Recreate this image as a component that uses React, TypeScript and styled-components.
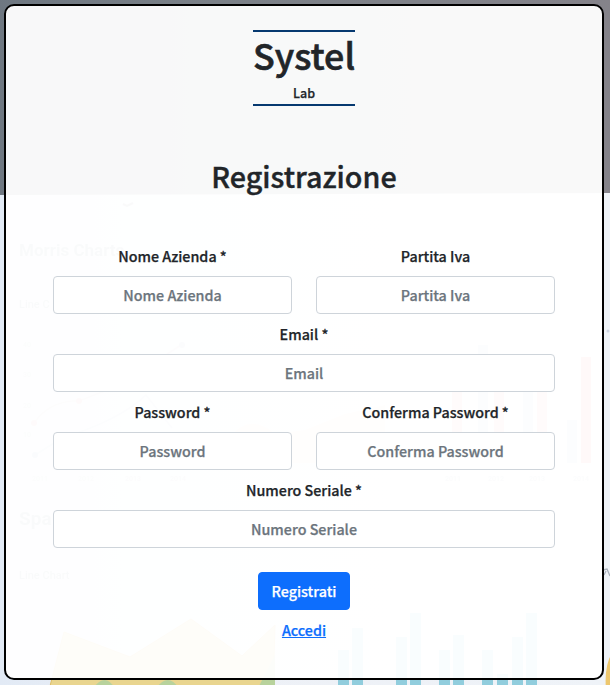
import React from "react";
import styled, { createGlobalStyle } from "styled-components";

const GlobalStyle = createGlobalStyle`
  *, *::before, *::after { box-sizing: border-box; }
  body {
    margin: 0;
    overflow: hidden;
    color: #212529;
    font-family: "Noto Sans CJK JP", "Noto Sans", sans-serif;
    font-size: 14.3px;
    font-weight: 500;
    line-height: 24px;
    -webkit-text-stroke: 0.25px currentColor;
  }
`;

const Page = styled.main`
  position: relative;
  isolation: isolate;
  width: 610px;
  height: 685px;
  padding: 4px 6px 5px 4px;
  overflow: hidden;
`;

const Backdrop = styled.svg`
  position: absolute;
  inset: 0;
  z-index: -1;
  -webkit-text-stroke: 0;
`;

const Card = styled.section`
  display: flex;
  flex-direction: column;
  align-items: center;
  height: 100%;
  padding: 24px 47px;
  border: 2px solid #000;
  border-radius: 10px;
  background: rgba(255, 255, 255, 0.95);
  text-align: center;
`;

const Brand = styled.header`
  height: 76px;
  border-top: 2px solid #063970;
  border-bottom: 2px solid #063970;
`;

const BrandName = styled.h1`
  margin: 0;
  font-size: 35.8px;
  font-weight: 500;
  line-height: 44px;
  -webkit-text-stroke-width: 0.6px;
`;

const BrandUnit = styled.p`
  margin: 7px 0 0;
  font-size: 12.5px;
  line-height: 20px;
`;

const Title = styled.h2`
  margin: 51px 0 0;
  font-size: 28.7px;
  font-weight: 500;
  line-height: 38px;
  -webkit-text-stroke-width: 0.4px;
`;

const Form = styled.form`
  display: grid;
  grid-template-columns: 1fr 1fr;
  column-gap: 24px;
  row-gap: 8px;
  width: 502px;
  margin-top: 49px;
`;

const Field = styled.label<{ $wide?: boolean }>`
  display: grid;
  row-gap: 8px;
  grid-column: ${({ $wide }) => ($wide ? "1 / -1" : "auto")};
`;

const Input = styled.input`
  width: 100%;
  height: 38px;
  padding: 5px 12px 7px;
  border: 1px solid #ced4da;
  border-radius: 4px;
  background: #fff;
  color: #212529;
  font: inherit;
  text-align: center;
  outline: none;
  &::placeholder { color: #6c757d; opacity: 1; }
`;

const Submit = styled.button`
  grid-column: 1 / -1;
  justify-self: center;
  width: 92px;
  height: 38px;
  margin-top: 16px;
  padding: 6px 12px;
  border: 1px solid #0d6efd;
  border-radius: 4px;
  background: #0d6efd;
  color: #fff;
  font: inherit;
`;

const LoginLink = styled.a`
  margin-top: 8px;
  color: #0d6efd;
  text-decoration: underline;
`;

const fields = [
  { label: "Nome Azienda *", placeholder: "Nome Azienda" },
  { label: "Partita Iva", placeholder: "Partita Iva" },
  { label: "Email *", placeholder: "Email", type: "email", wide: true },
  { label: "Password *", placeholder: "Password", type: "password" },
  { label: "Conferma Password *", placeholder: "Conferma Password", type: "password" },
  { label: "Numero Seriale *", placeholder: "Numero Seriale", wide: true },
];

const cyanBars = [
  [338, 650], [352, 628], [396, 637], [410, 613], [439, 650],
  [453, 635], [482, 650], [497, 674], [512, 637], [526, 613],
];
const redBars = [[452, 388], [494, 386], [537, 388], [581, 357]];
const blueBars = [[478, 345], [523, 390], [567, 420]];

function DashboardBackdrop() {
  return (
    <Backdrop width="610" height="685" viewBox="0 0 610 685" aria-hidden="true">
      <defs>
        <linearGradient id="wall" x1="0" x2="1">
          <stop offset="0" stopColor="#6e7781" />
          <stop offset=".35" stopColor="#7b8188" />
          <stop offset="1" stopColor="#85838a" />
        </linearGradient>
        <linearGradient id="screen" x1="0" x2="1">
          <stop offset="0" stopColor="#e2eaf5" />
          <stop offset=".3" stopColor="#edf0f6" />
          <stop offset="1" stopColor="#eff3f8" />
        </linearGradient>
        <filter id="soft" colorInterpolationFilters="sRGB"><feGaussianBlur stdDeviation=".7" /></filter>
      </defs>
      <rect width="610" height="685" fill="url(#screen)" />
      <g filter="url(#soft)">
        <path d="M-4-4H614V193L-4 195Z" fill="url(#wall)" />
        <path d="M123 204l4 2 6-3" stroke="#8f969d" strokeWidth="2" fill="none" />
        <g fill="#8fa3a8" fontFamily="Roboto, sans-serif">
          <text x="19" y="256" fontSize="17" fontWeight="700">Morris Charts</text>
          <text x="19" y="308" fontSize="11">Line C</text>
          <text x="19" y="525" fontSize="19" fontWeight="700">Spa</text>
          <text x="19" y="579" fontSize="11">Line Chart</text>
        </g>
        <g fill="#b5bec6" fontFamily="Roboto, sans-serif" fontSize="7">
          {[32, 78, 125, 170, 445, 488, 529, 573].map((x, i) => (
            <text key={x} x={x} y="481">{2011 + (i % 4)}</text>
          ))}
          <text x="23" y="347">40</text><text x="23" y="377">30</text>
          <text x="23" y="408">20</text><text x="23" y="437">10</text>
        </g>
        <path d="M34 423Q50 400 79 401L120 385L181 345" fill="none" stroke="#d5c9cb" strokeWidth="1.5" />
        <circle cx="34" cy="423" r="3" fill="#e0a0a6" />
        <circle cx="79" cy="401" r="3" fill="#e0a0a6" />
        <path d="M35 455L62 438Q120 420 146 395L172 428" fill="none" stroke="#b8cde0" strokeWidth="1.5" />
        <circle cx="35" cy="455" r="3" fill="#98b5d0" />
        <circle cx="182" cy="345" r="3" fill="#a8c1d8" />
        <path d="M305 430L345 414L385 405V463H230V437Q250 412 275 434Z" fill="#f0ead2" />
        {redBars.map(([x, y], i) => (
          <rect key={x} x={x} y={y} width="10" height={463 - y} fill={i === 3 ? "#f0868c" : "#f2b0b4"} />
        ))}
        {blueBars.map(([x, y]) => <rect key={x} x={x} y={y} width="10" height={463 - y} fill="#bdd6e8" />)}
        <path d="M49 690L64 632L130 657L191 619L242 656L275 625L273 690Z" fill="#e9d58f" stroke="#dfbd65" />
        <path d="M92 690Q105 670 116 690ZM155 690Q168 670 180 690ZM257 690L275 655V690Z" fill="#b8d29c" />
        {cyanBars.map(([x, y]) => <rect key={x} x={x} y={y} width="11" height={690 - y} fill="#91cddd" />)}
        <circle cx="608" cy="331" r="1.5" fill="#cdd4e1" />
        <path d="M603 570l4-1 3 7M604 575l2-4" fill="none" stroke="#a9b0bb" strokeWidth="1.3" />
        <path d="M612 653Q604 666 606 690H615V653Z" fill="#edc76e" />
      </g>
    </Backdrop>
  );
}

export default function App() {
  return (
    <Page>
      <GlobalStyle />
      <DashboardBackdrop />
      <Card>
        <Brand>
          <BrandName>Systel</BrandName>
          <BrandUnit>Lab</BrandUnit>
        </Brand>
        <Title>Registrazione</Title>
        <Form onSubmit={(event) => event.preventDefault()}>
          {fields.map(({ label, placeholder, type, wide }) => (
            <Field key={label} $wide={wide}>
              <span>{label}</span>
              <Input type={type ?? "text"} placeholder={placeholder} />
            </Field>
          ))}
          <Submit type="submit">Registrati</Submit>
        </Form>
        <LoginLink href="#">Accedi</LoginLink>
      </Card>
    </Page>
  );
}
